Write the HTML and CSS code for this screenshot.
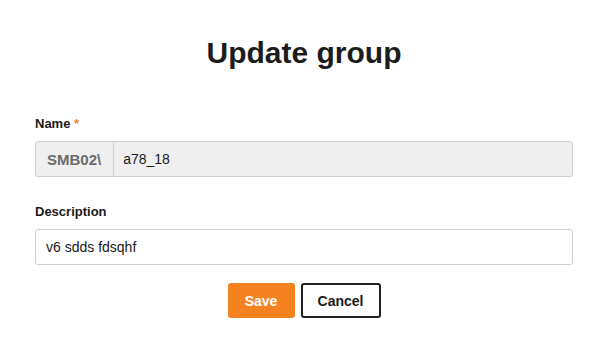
FILE: index.html
```html
<!DOCTYPE html>
<html lang="en">
<head>
    <meta charset="UTF-8">
    <meta name="viewport" content="width=device-width, initial-scale=1.0">
    <title>Update group</title>
    <link rel="stylesheet" href="styles.css">
</head>
<body>
    <div class="dialog">
        <h1>Update group</h1>
        <form class="group-form">
            <div class="field">
                <label for="name">Name <span class="required">*</span></label>
                <div class="input-group">
                    <span class="prefix">SMB02\</span>
                    <input type="text" id="name" value="a78_18" disabled>
                </div>
            </div>
            <div class="field field-last">
                <label for="desc">Description</label>
                <input type="text" id="desc" class="text-input" value="v6 sdds fdsqhf">
            </div>
            <div class="actions">
                <button type="button" class="save">Save</button>
                <button type="button" class="cancel">Cancel</button>
            </div>
        </form>
    </div>
</body>
</html>
```

FILE: styles.css
```css
* {
  margin: 0;
  padding: 0;
  box-sizing: border-box;
}
body {
  font-family: "Liberation Sans", Arial, sans-serif;
  background-color: #fff;
  color: #1a1a1a;
}
.dialog {
  padding: 36px 35px 0 35px;
}
.dialog h1 {
  text-align: center;
  font-size: 30px;
  font-weight: bold;
  color: #1c1c1c;
  margin-bottom: 46px;
}
.field {
  margin-bottom: 27px;
}
.field-last {
  margin-bottom: 18px;
}
.field label {
  display: block;
  font-size: 13px;
  font-weight: bold;
  margin-bottom: 10px;
}
.required {
  color: #f58220;
}
.input-group {
  display: flex;
  height: 36px;
  border: 1px solid #cfcfcf;
  border-radius: 3px;
  background-color: #efefef;
}
.input-group .prefix {
  display: flex;
  align-items: center;
  padding: 0 12px 0 11px;
  border-right: 1px solid #cfcfcf;
  font-size: 15px;
  font-weight: bold;
  color: #6b6b6b;
}
.input-group input {
  flex: 1;
  border: none;
  background: transparent;
  padding: 0 9px;
  font-family: inherit;
  font-size: 14px;
  color: #1a1a1a;
}
.text-input {
  display: block;
  width: 100%;
  height: 36px;
  border: 1px solid #cfcfcf;
  border-radius: 3px;
  padding: 0 10px;
  font-family: inherit;
  font-size: 14px;
  color: #1a1a1a;
  background-color: #fff;
}
.actions {
  display: flex;
  justify-content: center;
  gap: 6px;
}
.actions button {
  height: 35px;
  font-family: inherit;
  font-size: 14px;
  font-weight: bold;
  border-radius: 3px;
  cursor: pointer;
}
.actions .save {
  width: 67px;
  background-color: #f58220;
  color: #fff;
  border: none;
}
.actions .cancel {
  width: 80px;
  background-color: #fff;
  color: #1a1a1a;
  border: 2px solid #222;
}
```
